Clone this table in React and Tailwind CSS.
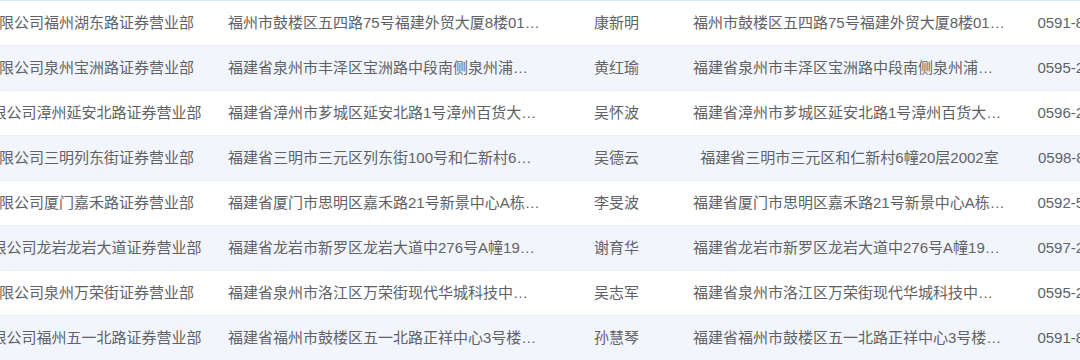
import React from 'react';

const rows = [
  {
    branch: '兴业证券股份有限公司福州湖东路证券营业部',
    addr: '福州市鼓楼区五四路75号福建外贸大厦8楼01单元',
    name: '康新明',
    office: '福州市鼓楼区五四路75号福建外贸大厦8楼01单元',
    phone: '0591-87562312',
  },
  {
    branch: '兴业证券股份有限公司泉州宝洲路证券营业部',
    addr: '福建省泉州市丰泽区宝洲路中段南侧泉州浦西万达广场',
    name: '黄红瑜',
    office: '福建省泉州市丰泽区宝洲路中段南侧泉州浦西万达广场',
    phone: '0595-22505912',
  },
  {
    branch: '兴业证券股份有限公司漳州延安北路证券营业部',
    addr: '福建省漳州市芗城区延安北路1号漳州百货大楼四层',
    name: '吴怀波',
    office: '福建省漳州市芗城区延安北路1号漳州百货大楼四层',
    phone: '0596-20235870',
  },
  {
    branch: '兴业证券股份有限公司三明列东街证券营业部',
    addr: '福建省三明市三元区列东街100号和仁新村6幢20层',
    name: '吴德云',
    office: '福建省三明市三元区和仁新村6幢20层2002室',
    phone: '0598-82411080',
  },
  {
    branch: '兴业证券股份有限公司厦门嘉禾路证券营业部',
    addr: '福建省厦门市思明区嘉禾路21号新景中心A栋十层',
    name: '李旻波',
    office: '福建省厦门市思明区嘉禾路21号新景中心A栋十层',
    phone: '0592-51618860',
  },
  {
    branch: '兴业证券股份有限公司龙岩龙岩大道证券营业部',
    addr: '福建省龙岩市新罗区龙岩大道中276号A幢19层1901室',
    name: '谢育华',
    office: '福建省龙岩市新罗区龙岩大道中276号A幢19层1901室',
    phone: '0597-29669880',
  },
  {
    branch: '兴业证券股份有限公司泉州万荣街证券营业部',
    addr: '福建省泉州市洛江区万荣街现代华城科技中心大厦',
    name: '吴志军',
    office: '福建省泉州市洛江区万荣街现代华城科技中心大厦',
    phone: '0595-22390688',
  },
  {
    branch: '兴业证券股份有限公司福州五一北路证券营业部',
    addr: '福建省福州市鼓楼区五一北路正祥中心3号楼二层',
    name: '孙慧琴',
    office: '福建省福州市鼓楼区五一北路正祥中心3号楼二层',
    phone: '0591-87601226',
  },
];

const App = () => {
  return (
    <div
      className="w-[1080px] h-[360px] overflow-hidden bg-white text-[#606266] text-[15px]"
      style={{ fontFamily: '"Liberation Sans", "Noto Sans CJK SC", sans-serif' }}
    >
      <div className="-ml-[130px] w-[1294px] border-t border-[#cfe3f6]">
        {rows.map((row, index) => (
          <div
            key={index}
            className={`grid grid-cols-[348px_332px_133px_333px_148px] h-[45px] items-center border-b border-[#ebeef5] ${
              index % 2 === 1 ? 'bg-[#f2f6fc]' : 'bg-white'
            }`}
          >
            <div className="px-[10px] text-center whitespace-nowrap overflow-hidden">{row.branch}</div>
            <div className="px-[10px] text-center whitespace-nowrap overflow-hidden text-ellipsis">{row.addr}</div>
            <div className="px-[10px] text-center whitespace-nowrap">{row.name}</div>
            <div className="px-[10px] text-center whitespace-nowrap overflow-hidden text-ellipsis">{row.office}</div>
            <div className="px-[10px] text-center whitespace-nowrap overflow-hidden">{row.phone}</div>
          </div>
        ))}
      </div>
    </div>
  );
};

export default App;
